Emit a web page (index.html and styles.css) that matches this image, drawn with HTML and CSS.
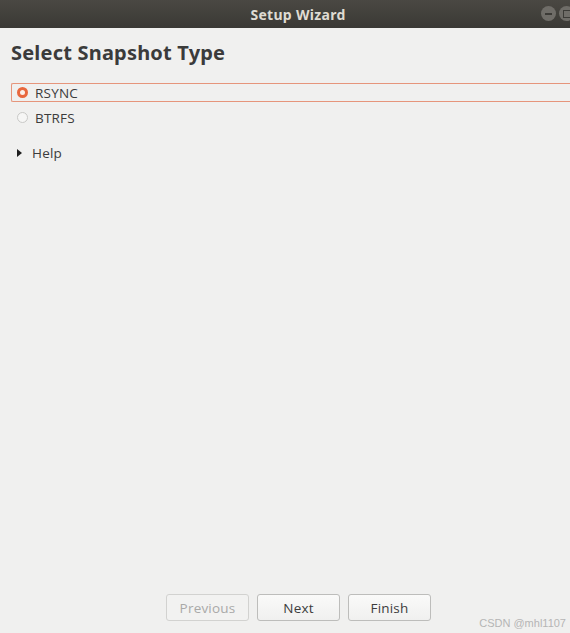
FILE: index.html
```html
<!DOCTYPE html>
<html>
<head>
<meta charset="utf-8">
<link rel="stylesheet" href="styles.css">
</head>
<body>
<div class="window">
  <div class="titlebar">
    <span class="title">Setup Wizard</span>
    <div class="wbtns">
      <span class="wbtn"><span class="dash"></span></span>
      <span class="wbtn"><span class="sq"></span></span>
    </div>
  </div>
  <div class="content">
    <h1 class="heading">Select Snapshot Type</h1>
    <div class="opt opt-selected">
      <span class="radio checked"></span><span class="label">RSYNC</span>
    </div>
    <div class="opt">
      <span class="radio"></span><span class="label">BTRFS</span>
    </div>
    <div class="expander">
      <span class="arrow"></span><span class="label">Help</span>
    </div>
  </div>
  <div class="footer">
    <button class="btn disabled">Previous</button>
    <button class="btn">Next</button>
    <button class="btn">Finish</button>
  </div>
  <div class="watermark">CSDN @mhl1107</div>
</div>
</body>
</html>
```
FILE: styles.css
```css
html, body { margin: 0; padding: 0; }
body {
  width: 570px; height: 633px; overflow: hidden;
  background: #f0f0ef;
  font-family: "Open Sans", "Noto Sans", "DejaVu Sans", sans-serif;
  color: #3c3c3c;
}
.window { position: relative; width: 570px; height: 633px; display: flex; flex-direction: column; }
.titlebar {
  position: relative;
  height: 28px;
  background: linear-gradient(#4a4843, #3a3935);
  display: flex; align-items: center; justify-content: center;
  flex-shrink: 0;
}
.title {
  color: #dfdbd2; font-weight: bold; font-size: 14px;
  font-family: "Noto Sans", "DejaVu Sans", sans-serif;
  margin-left: 26px; letter-spacing: 0.3px;
}
.wbtns { position: absolute; right: -4px; top: 6px; display: flex; gap: 3px; }
.wbtn {
  width: 15px; height: 15px; border-radius: 50%;
  background: #6f6d68;
  display: flex; align-items: center; justify-content: center;
}
.dash { width: 7px; height: 2px; background: #3c3b37; }
.sq { width: 6px; height: 6px; border: 1px solid #3c3b37; }
.content { padding: 10px 0 0 11px; flex: 1; }
.heading {
  margin: 0 0 15px 0; font-size: 20px; font-weight: bold; color: #3b3b3b;
  font-family: "Noto Sans", "DejaVu Sans", sans-serif; letter-spacing: 0.2px;
  line-height: 30px;
}
.opt {
  display: flex; align-items: center; height: 17px;
  padding-left: 5px; font-size: 13.5px;
  border: 1px solid transparent; margin-bottom: 6px;
}
.opt-selected { border: 1px solid #e6957b; border-right: none; border-radius: 2px 0 0 2px; }
.radio {
  width: 9px; height: 9px; border-radius: 50%;
  border: 1px solid #c9c9c7; background: #f6f6f5;
  margin-right: 7px; box-sizing: content-box;
}
.radio.checked {
  width: 5px; height: 5px; border-width: 3px;
  border-color: #e8683e;
  background: #fbf0ea;
}
.label { color: #3c3c3c; letter-spacing: 0.2px; }
.expander { display: flex; align-items: center; padding-left: 6px; margin-top: 17px; font-size: 13.5px; }
.arrow {
  width: 0; height: 0; border-left: 5px solid #1e1e1e;
  border-top: 4px solid transparent; border-bottom: 4px solid transparent;
  margin-right: 10px;
}
.footer { display: flex; justify-content: center; gap: 8px; padding-bottom: 12px; padding-left: 27px; }
.btn {
  width: 83px; height: 27px; font-size: 13.5px;
  font-family: "Open Sans", "Noto Sans", sans-serif;
  background: linear-gradient(#fafaf9, #f0f0ef);
  border: 1px solid #bdbdbb; border-radius: 3px; color: #3c3c3c;
  padding: 0; letter-spacing: 0.2px;
}
.btn.disabled { color: #a9a9a8; border-color: #d2d2d0; background: #f2f2f1; }
.watermark {
  position: absolute; right: 4px; bottom: 4px;
  font-family: "Liberation Sans", Arial, sans-serif; font-size: 11px; color: #b5b5b5;
}
```
